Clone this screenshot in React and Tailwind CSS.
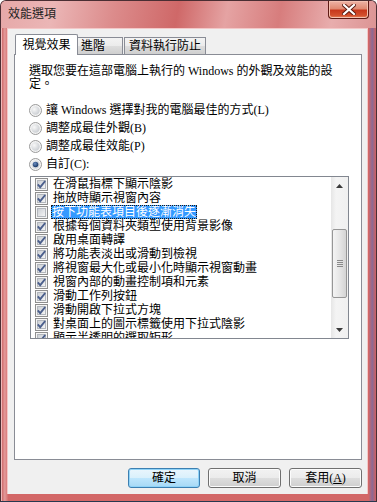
import React from 'react';

const rows = [
  { label: '在滑鼠指標下顯示陰影', checked: true },
  { label: '拖放時顯示視窗內容', checked: true },
  { label: '按下功能表項目後逐漸消失', checked: false, selected: true },
  { label: '根據每個資料夾類型使用背景影像', checked: true },
  { label: '啟用桌面轉譯', checked: true },
  { label: '將功能表淡出或滑動到檢視', checked: true },
  { label: '將視窗最大化或最小化時顯示視窗動畫', checked: true },
  { label: '視窗內部的動畫控制項和元素', checked: true },
  { label: '滑動工作列按鈕', checked: true },
  { label: '滑動開啟下拉式方塊', checked: true },
  { label: '對桌面上的圖示標籤使用下拉式陰影', checked: true },
  { label: '顯示半透明的選取矩形', checked: true },
];

const radios = [
  { label: <>讓 Windows 選擇對我的電腦最佳的方式(L)</> },
  { label: <>調整成最佳外觀(B)</> },
  { label: <>調整成最佳效能(P)</> },
  { label: <>自訂(C):</>, selected: true },
];

function CheckBox({ checked }) {
  return (
    <svg width="13" height="13" viewBox="0 0 13 13" className="shrink-0">
      <defs>
        <linearGradient id="cbFill" x1="0" y1="0" x2="1" y2="1">
          <stop offset="0" stopColor="#c9cdd3" />
          <stop offset="1" stopColor="#f7f7f7" />
        </linearGradient>
      </defs>
      <rect x="0.5" y="0.5" width="12" height="12" fill="#f5f5f5" stroke="#8f8f8f" />
      <rect x="2.5" y="2.5" width="8" height="8" fill="url(#cbFill)" stroke="#b3b7bd" />
      {checked && (
        <path d="M2.8 6.4 L5.2 9.2 L10.2 3" fill="none" stroke="#4b5f8c" strokeWidth="1.9" />
      )}
    </svg>
  );
}

function Radio({ selected }) {
  return (
    <svg width="13" height="13" viewBox="0 0 13 13" className="shrink-0">
      <defs>
        <radialGradient id="rdFill" cx="0.35" cy="0.35" r="0.8">
          <stop offset="0" stopColor="#f8f8f8" />
          <stop offset="1" stopColor="#c4c8cd" />
        </radialGradient>
        <radialGradient id="rdDot" cx="0.4" cy="0.35" r="0.7">
          <stop offset="0" stopColor="#6d8fc0" />
          <stop offset="1" stopColor="#0f2e5e" />
        </radialGradient>
      </defs>
      <circle cx="6.5" cy="6.5" r="6" fill="#f4f4f4" stroke="#9a9a9a" />
      <circle cx="6.5" cy="6.5" r="4.2" fill="url(#rdFill)" />
      {selected && <circle cx="6.5" cy="6.5" r="2.8" fill="url(#rdDot)" />}
    </svg>
  );
}

function ScrollBar() {
  return (
    <div className="w-[17px] h-full flex flex-col bg-[linear-gradient(90deg,#e6e6e6,#f4f4f4_30%,#f0f0f0)]">
      <div className="h-[17px] flex items-center justify-center">
        <svg width="7" height="4" viewBox="0 0 7 4"><path d="M0 4 L3.5 0 L7 4 Z" fill="#3a3a3a" /></svg>
      </div>
      <div className="h-[35px]" />
      <div className="mx-[1px] h-[69px] rounded-[2px] border border-[#969696] bg-[linear-gradient(90deg,#f4f4f4,#e6e6e6_50%,#d4d4d4)] flex flex-col items-center justify-center gap-[1px]">
        <div className="w-[6px] h-[1px] bg-[#8a8a8a]" />
        <div className="w-[6px] h-[1px] bg-[#8a8a8a]" />
        <div className="w-[6px] h-[1px] bg-[#8a8a8a]" />
        <div className="w-[6px] h-[1px] bg-[#8a8a8a]" />
      </div>
      <div className="flex-1" />
      <div className="h-[17px] flex items-center justify-center">
        <svg width="7" height="4" viewBox="0 0 7 4"><path d="M0 0 L3.5 4 L7 0 Z" fill="#3a3a3a" /></svg>
      </div>
    </div>
  );
}

function Button({ children, primary }) {
  return (
    <div
      className={
        primary
          ? 'w-[72px] h-[20px] rounded-[3px] border border-[#3c7fb1] bg-[linear-gradient(180deg,#eaf6fd_0%,#d9f0fc_50%,#bee6fd_51%,#a7d9f5_100%)] shadow-[inset_0_0_0_1px_#8fd3f8] flex items-center justify-center text-[12px] text-black'
          : 'w-[73px] h-[20px] rounded-[3px] border border-[#707070] bg-[linear-gradient(180deg,#f2f2f2_0%,#ebebeb_50%,#dddddd_51%,#cfcfcf_100%)] shadow-[inset_0_0_0_1px_#fcfcfc] flex items-center justify-center text-[12px] text-black'
      }
    >
      {children}
    </div>
  );
}

export default function App() {
  return (
    <div className="w-[377px] h-[502px] bg-white font-['Liberation_Serif','Noto_Sans_CJK_TC',serif]">
      <div className="w-[377px] h-[502px] flex flex-col rounded-t-[6px] border border-[#4a2e33] border-b-[#27384f] bg-[linear-gradient(90deg,#c85a5a,#e29a9a_1%,#d36767_2%,#d26767_98%,#8a6a96_99%,#d06060)] shadow-[inset_1px_1px_0_#f0b8b8]">
        {/* title bar */}
        <div className="h-[27px] flex items-start rounded-t-[5px] bg-[linear-gradient(100deg,#e6a8a8_0%,#ebb6b6_14%,#dc8c8c_30%,#cf6868_47%,#e5a3a3_60%,#d77d7d_74%,#e8adad_88%,#dc9494_100%)]">
          <div className="pl-[7px] pt-[5px] text-[12px] leading-[16px] text-[#1e1e1e]">效能選項</div>
          <div className="flex-1" />
          <div className="mr-[7px] w-[41px] h-[18px] rounded-b-[4px] border border-t-0 border-[#5e1a14] bg-[linear-gradient(180deg,#eeb3a6_0%,#e08a72_45%,#c8381c_55%,#d3502e_85%,#e98a5e_100%)] shadow-[inset_0_0_0_1px_#f4c0b0] flex items-center justify-center">
            <svg width="14" height="11" viewBox="0 0 14 11">
              <path d="M2 1 L12 10 M12 1 L2 10" stroke="#5a1a10" strokeWidth="4" strokeLinecap="square" />
              <path d="M2 1 L12 10 M12 1 L2 10" stroke="#ffffff" strokeWidth="2.2" strokeLinecap="square" />
            </svg>
          </div>
        </div>

        {/* client area */}
        <div className="ml-[6px] w-[361px] h-[466px] bg-[#f0f0f0] border border-[#f3c8c8] border-b-0 pl-[6px] pr-[5px] flex flex-col">
          {/* tabs */}
          <div className="mt-[5px] ml-[1px] h-[20px] flex items-end text-[12px] text-black">
            <div className="relative z-10 -mb-px w-[63px] h-[21px] bg-white border border-b-0 border-[#898c95] rounded-t-[2px] flex items-center justify-center pb-[1px]">
              視覺效果
            </div>
            <div className="w-[45px] h-[17px] border border-b-0 border-l-0 border-[#898c95] bg-[linear-gradient(180deg,#f3f3f3_0%,#ebebeb_50%,#dddddd_51%,#cfcfcf_100%)] flex items-center pl-[3px]">
              進階
            </div>
            <div className="ml-[1px] w-[82px] h-[17px] border border-b-0 border-[#898c95] bg-[linear-gradient(180deg,#f3f3f3_0%,#ebebeb_50%,#dddddd_51%,#cfcfcf_100%)] flex items-center justify-center">
              資料執行防止
            </div>
          </div>

          {/* panel */}
          <div className="w-[348px] h-[406px] bg-white border border-[#898c95] pt-[10px] pl-[14px] text-[12px] text-black">
            <p className="leading-[13px]">
              選取您要在這部電腦上執行的 Windows 的外觀及效能的設
              <br />
              定。
            </p>

            <div className="mt-[10px] flex flex-col">
              {radios.map((r, i) => (
                <div key={i} className="h-[18px] flex items-center gap-[4px] leading-[14px]">
                  <Radio selected={r.selected} />
                  <span>{r.label}</span>
                </div>
              ))}
            </div>

            <div className="mt-[3px] ml-[1px] w-[319px] h-[163px] border border-[#828790] bg-white flex">
              <div className="flex-1 overflow-hidden pl-[4px]">
                {rows.map((r, i) => (
                  <div key={i} className="h-[14px] flex items-center leading-[14px] whitespace-nowrap">
                    <CheckBox checked={r.checked} />
                    <span
                      className={
                        r.selected
                          ? 'ml-[3px] px-[1px] bg-[#3399ff] text-white outline outline-1 outline-dotted outline-[#1a1a1a] -outline-offset-1'
                          : 'ml-[5px]'
                      }
                    >
                      {r.label}
                    </span>
                  </div>
                ))}
              </div>
              <ScrollBar />
            </div>
          </div>

          {/* buttons */}
          <div className="mt-[8px] w-[348px] flex justify-end gap-[8px] text-[12px]">
            <Button primary>確定</Button>
            <Button>取消</Button>
            <Button>
              <span>
                套用(<span className="underline">A</span>)
              </span>
            </Button>
          </div>
        </div>
      </div>
    </div>
  );
}
